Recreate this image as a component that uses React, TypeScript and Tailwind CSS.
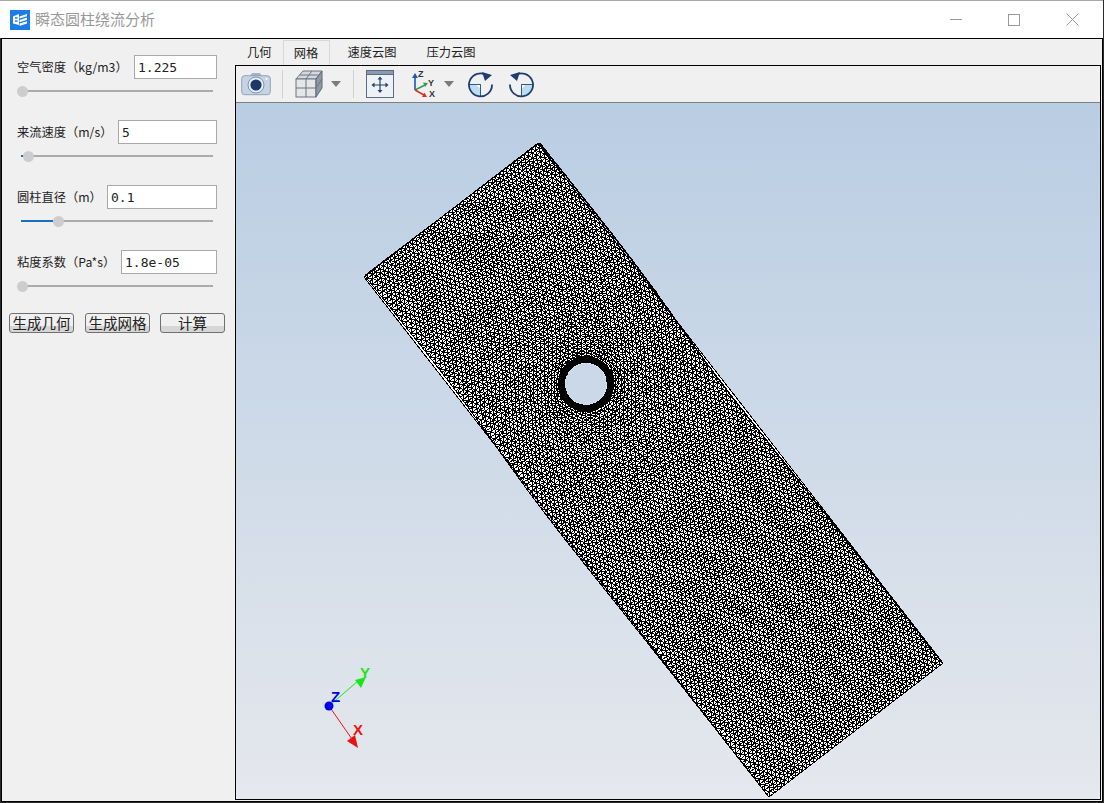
import { useMemo } from "react"

const uiFont = { fontFamily: '"Noto Sans CJK SC", sans-serif' }

const params = [
  { label: "空气密度（kg/m3）", value: "1.225", inputW: "w-[83px]", fill: 0, thumb: 0 },
  { label: "来流速度（m/s）", value: "5", inputW: "w-[99px]", fill: 6, thumb: 6 },
  { label: "圆柱直径（m）", value: "0.1", inputW: "w-[110px]", fill: 32, thumb: 36 },
  { label: "粘度系数（Pa*s）", value: "1.8e-05", inputW: "w-[96px]", fill: 0, thumb: 0 },
]

// mesh corners in window pixels
const A = { x: 364, y: 277 }
const U = { x: 174, y: -134 }
const V = { x: 405, y: 520 }
const C = { x: 586, y: 384 }

type Pt = { x: number; y: number } | null | undefined

function rand(i: number, j: number, k: number) {
  const s = Math.sin(i * 12.9898 + j * 78.233 + k * 37.719) * 43758.5453
  return s - Math.floor(s) - 0.5
}

function buildMesh() {
  const W = Math.hypot(U.x, U.y)
  const H = Math.hypot(V.x, V.y)
  const s = 4.55
  const rowH = s * 0.866
  const cols = Math.ceil(W / s) + 1
  const rows = Math.round(H / rowH)
  const ux = { x: U.x / W, y: U.y / W }
  const vx = { x: V.x / H, y: V.y / H }
  const pts: Pt[][] = []

  for (let j = 0; j <= rows; j++) {
    const row: Pt[] = []
    const v0 = (j / rows) * H
    for (let i = 0; i <= cols; i++) {
      let u = Math.min(W, i * s + (j % 2 ? s / 2 : 0))
      if (i === 0) u = 0
      if (i === cols) u = W
      let px = A.x + ux.x * u + vx.x * v0
      let py = A.y + ux.y * u + vx.y * v0
      const edge = i === 0 || i === cols || j === 0 || j === rows
      const dx = px - C.x
      const dy = py - C.y
      const r = Math.hypot(dx, dy)
      if (r < 3) {
        row.push(null)
        continue
      }
      const r2 = r + 18 * Math.exp(-(r - 3) / 18)
      const swirl = 0.22 * Math.exp(-r / 70)
      const a = Math.atan2(dy, dx) + swirl
      px = C.x + Math.cos(a) * r2
      py = C.y + Math.sin(a) * r2
      if (!edge) {
        const amp = r < 120 ? 0.9 : 0.3
        px += rand(i, j, 1) * amp
        py += rand(i, j, 2) * amp
      }
      row.push({ x: px, y: py })
    }
    pts.push(row)
  }

  const seg = (a: Pt, b: Pt) => {
    if (!a || !b) return ""
    // nothing may cross the cylinder hole
    if (Math.hypot((a.x + b.x) / 2 - C.x, (a.y + b.y) / 2 - C.y) < 21) return ""
    return `M${a.x.toFixed(1)} ${a.y.toFixed(1)}L${b.x.toFixed(1)} ${b.y.toFixed(1)}`
  }

  let d = ""
  for (let j = 0; j <= rows; j++) {
    for (let i = 0; i <= cols; i++) {
      const p = pts[j][i]
      d += seg(p, pts[j][i + 1])
      if (j < rows) {
        d += seg(p, pts[j + 1][i])
        d += seg(p, j % 2 ? pts[j + 1][i + 1] : pts[j + 1][i - 1])
      }
    }
  }
  return d
}

function AppIcon() {
  return (
    <svg width="20" height="20" viewBox="0 0 20 20" className="shrink-0">
      <rect width="20" height="20" fill="#1b7ee8" />
      <path d="M3 6.5 9 4v11l-6-1.5z" fill="#fff" />
      <path d="M5 8h2.5M5 11h2.5" stroke="#1b7ee8" strokeWidth="1.3" />
      <path d="M9.5 6.5 17 4v2.2L9.5 8.6zM9.5 10 17 7.6v2.2l-7.5 2.4zM9.5 13.6l7.5-2.4v2.2L9.5 16z" fill="#fff" />
    </svg>
  )
}

function Camera() {
  return (
    <svg width="30" height="26" viewBox="0 0 30 26">
      <path d="M9 5l2-3h8l2 3z" fill="#9fb3cc" />
      <rect x="0.7" y="4.7" width="28.6" height="19" rx="3" fill="#c6d3e3" stroke="#8fa3bd" />
      <circle cx="15" cy="14" r="8" fill="#e8eef5" stroke="#7d93b0" />
      <circle cx="15" cy="14" r="5.6" fill="#1d3768" />
      <circle cx="25.5" cy="8" r="1" fill="#fff" />
    </svg>
  )
}

function Cube() {
  return (
    <svg width="28" height="28" viewBox="0 0 28 28">
      <path d="M1 9 8 1h19l-6 8z" fill="#d5d9de" stroke="#6d7580" />
      <rect x="1" y="9" width="20" height="18" fill="#e4e6e8" stroke="#6d7580" />
      <path d="M21 9l6-8v17l-6 9z" fill="#8f98a6" stroke="#5f6875" />
      <path d="M1 18h20M11 9v18M11 9l6-8M4.5 5h19M21 18l6-9" stroke="#6d7580" fill="none" />
    </svg>
  )
}

function Caret() {
  return (
    <svg width="10" height="6" viewBox="0 0 10 6">
      <path d="M0 0h10L5 6z" fill="#7b7b7b" />
    </svg>
  )
}

function FitView() {
  return (
    <svg width="28" height="28" viewBox="0 0 28 28">
      <rect x="0.5" y="0.5" width="27" height="27" fill="#eef1f5" stroke="#5b6b86" />
      <rect x="0.5" y="0.5" width="27" height="4" fill="#8c9ab0" stroke="#5b6b86" />
      <path d="M14 8v13M7.5 15h13" stroke="#24406f" strokeWidth="1.2" />
      <path d="M14 6.5l-2.5 3h5zM14 23l-2.5-3h5zM5.5 15l3-2.5v5zM22.5 15l-3-2.5v5z" fill="#24406f" />
    </svg>
  )
}

function AxisIcon() {
  return (
    <svg width="28" height="28" viewBox="0 0 28 28">
      <path d="M5 20V6" stroke="#1f56b8" strokeWidth="1.6" />
      <path d="M5 3l-3 5h6z" fill="#1f56b8" />
      <path d="M5 20l10-5" stroke="#2f9e4f" strokeWidth="1.6" />
      <path d="M18 13l-5-.5 2.2 4.5z" fill="#2f9e4f" />
      <path d="M5 20l9 5" stroke="#e02a2a" strokeWidth="1.6" />
      <path d="M17 27l-5 0 2.5-4.5z" fill="#e02a2a" />
      <text x="8" y="7" fontSize="9" fontWeight="700" fill="#333" fontFamily="Liberation Sans">Z</text>
      <text x="18" y="16" fontSize="9" fontWeight="700" fill="#333" fontFamily="Liberation Sans">Y</text>
      <text x="19" y="27" fontSize="9" fontWeight="700" fill="#333" fontFamily="Liberation Sans">X</text>
    </svg>
  )
}

function Rotate({ flip }: { flip?: boolean }) {
  return (
    <svg width="27" height="27" viewBox="0 0 27 27" className={flip ? "-scale-x-100" : ""}>
      <path d="M13.5 13.5V25A11.5 11.5 0 0 1 2 13.5z" fill="#bcdcf0" />
      <path d="M9 13.5h4.5V18" fill="#fff" stroke="#2d5b8e" strokeWidth="0.8" />
      <path d="M2 13.5h11.5V25" fill="none" stroke="#2d5b8e" strokeWidth="1" />
      <path d="M20 4.4A11.5 11.5 0 1 0 25 13.5" fill="none" stroke="#1d3f6e" strokeWidth="1.8" />
      <path d="M15 1l10 3-7 6z" fill="#1d3f6e" />
    </svg>
  )
}

function Slider({ fill, thumb }: { fill: number; thumb: number }) {
  return (
    <div className="relative ml-[19px] mt-[11px] h-[2px] w-[192px] bg-[#ababab]">
      <div className="h-full bg-[#1a6fc4]" style={{ width: fill }} />
      <div
        className="absolute top-[-4px] h-[11px] w-[11px] rounded-full bg-[#cdcdcd]"
        style={{ left: thumb - 4 }}
      />
    </div>
  )
}

function MeshView() {
  const d = useMemo(buildMesh, [])
  const poly = `M${A.x} ${A.y}L${A.x + U.x} ${A.y + U.y}L${A.x + U.x + V.x} ${A.y + U.y + V.y}L${A.x + V.x} ${A.y + V.y}Z`
  const hole = `M${C.x - 21} ${C.y}a21 21 0 1 0 42 0a21 21 0 1 0 -42 0Z`
  return (
    <svg width="863" height="696" viewBox="236 103 863 696" className="block">
      <path d={poly + hole} fill="#fff" fillRule="evenodd" />
      <path d={d} fill="none" stroke="#000" strokeWidth="1" shapeRendering="crispEdges" />
      <path d={poly} fill="none" stroke="#000" strokeWidth="1" shapeRendering="crispEdges" />
      <circle cx={C.x} cy={C.y} r="24.5" fill="none" stroke="#000" strokeWidth="7" shapeRendering="crispEdges" />
      <g>
        <path d="M329 706 358 681" stroke="#19e619" strokeWidth="1" />
        <path d="M366 677 355 680 361 688z" fill="#19e619" />
        <path d="M329 706 354 742" stroke="#ee1111" strokeWidth="1" />
        <path d="M358 748 347 741 355 735z" fill="#ee1111" />
        <circle cx="329" cy="706" r="4.5" fill="#0000ee" />
        <text x="331" y="702" fontSize="15" fontWeight="700" fill="#0000ee" fontFamily="Liberation Sans">Z</text>
        <text x="360" y="678" fontSize="15" fontWeight="700" fill="#19e619" fontFamily="Liberation Sans">Y</text>
        <text x="353" y="735" fontSize="15" fontWeight="700" fill="#ee1111" fontFamily="Liberation Sans">X</text>
      </g>
    </svg>
  )
}

export default function App() {
  return (
    <div className="flex h-[803px] w-[1104px] flex-col overflow-hidden bg-[#2b2b2b] pb-px pr-px" style={uiFont}>
      {/* title bar */}
      <div className="flex h-[38px] shrink-0 items-center border-t border-[#a8a8a8] bg-white pl-[10px]">
        <AppIcon />
        <span className="ml-[5px] text-[15px] text-[#999999]">瞬态圆柱绕流分析</span>
        <div className="ml-auto flex items-center">
          <div className="h-px w-[12px] bg-[#999999]" />
          <div className="ml-[46px] h-[12px] w-[12px] border border-[#999999]" />
          <svg width="13" height="13" viewBox="0 0 13 13" className="ml-[46px] mr-[24px]">
            <path d="M0.5 0.5 12.5 12.5M12.5 0.5 0.5 12.5" stroke="#999999" fill="none" />
          </svg>
        </div>
      </div>

      {/* client area */}
      <div className="ml-px flex min-h-0 flex-1 border-x border-b border-t border-black bg-[#f0f0f0]">
        <div className="w-[233px] shrink-0 text-[12.25px] text-[#222222]">
          <div className="flex flex-col gap-[40px] pt-[16px]">
            {params.map((p) => (
              <div key={p.label} className="h-[25px]">
                <div className="flex h-[24px] items-center justify-between pl-[15px] pr-[18px]">
                  <span className="whitespace-nowrap">{p.label}</span>
                  <div
                    className={`${p.inputW} flex h-[24px] items-center border border-[#a9a9a9] bg-white pl-[3px] pt-px text-[13px] text-[#222222] font-['DejaVu_Sans_Mono',monospace]`}
                  >
                    {p.value}
                  </div>
                </div>
                <Slider fill={p.fill} thumb={p.thumb} />
              </div>
            ))}
          </div>
          <div className="mt-[38px] flex pl-[7px]">
            {["生成几何", "生成网格", "计算"].map((b, i) => (
              <div
                key={b}
                className={`flex h-[20px] w-[65px] items-center justify-center rounded-[3px] border border-[#707070] bg-[linear-gradient(#f0f0f0_65%,#d6d6d6_65%)] text-[14.5px] text-[#222222] ${
                  i === 1 ? "ml-[11px] mr-[10px]" : ""
                }`}
              >
                {b}
              </div>
            ))}
          </div>
        </div>

        <div className="flex min-w-0 flex-1 flex-col pb-[1px] pr-[1px]">
          {/* tabs */}
          <div className="mt-px flex h-[25px] shrink-0 items-center pl-[1px] text-[12.25px] text-[#222222]">
            <span className="px-[11px]">几何</span>
            <span className="flex h-[25px] w-[47px] items-center justify-center border border-b-0 border-[#d8d8d8]">网格</span>
            <span className="ml-[18px]">速度云图</span>
            <span className="ml-[30px]">压力云图</span>
          </div>

          {/* viewport */}
          <div className="flex min-h-0 flex-1 flex-col border border-black">
            <div className="flex h-[37px] shrink-0 items-center border-b border-[#7f7f7f] bg-[#f0f0f0] pl-[5px]">
              <Camera />
              <div className="ml-[11px] h-[28px] w-px bg-[#d0d0d0]" />
              <div className="ml-[12px]">
                <Cube />
              </div>
              <div className="ml-[8px]">
                <Caret />
              </div>
              <div className="ml-[12px] h-[28px] w-px bg-[#d0d0d0]" />
              <div className="ml-[12px]">
                <FitView />
              </div>
              <div className="ml-[16px]">
                <AxisIcon />
              </div>
              <div className="ml-[6px]">
                <Caret />
              </div>
              <div className="ml-[13px]">
                <Rotate />
              </div>
              <div className="ml-[14px]">
                <Rotate flip />
              </div>
            </div>
            <div className="min-h-0 flex-1 overflow-hidden bg-[linear-gradient(#b9cde3,#e5e8ed)]">
              <MeshView />
            </div>
          </div>
        </div>
      </div>
    </div>
  )
}
